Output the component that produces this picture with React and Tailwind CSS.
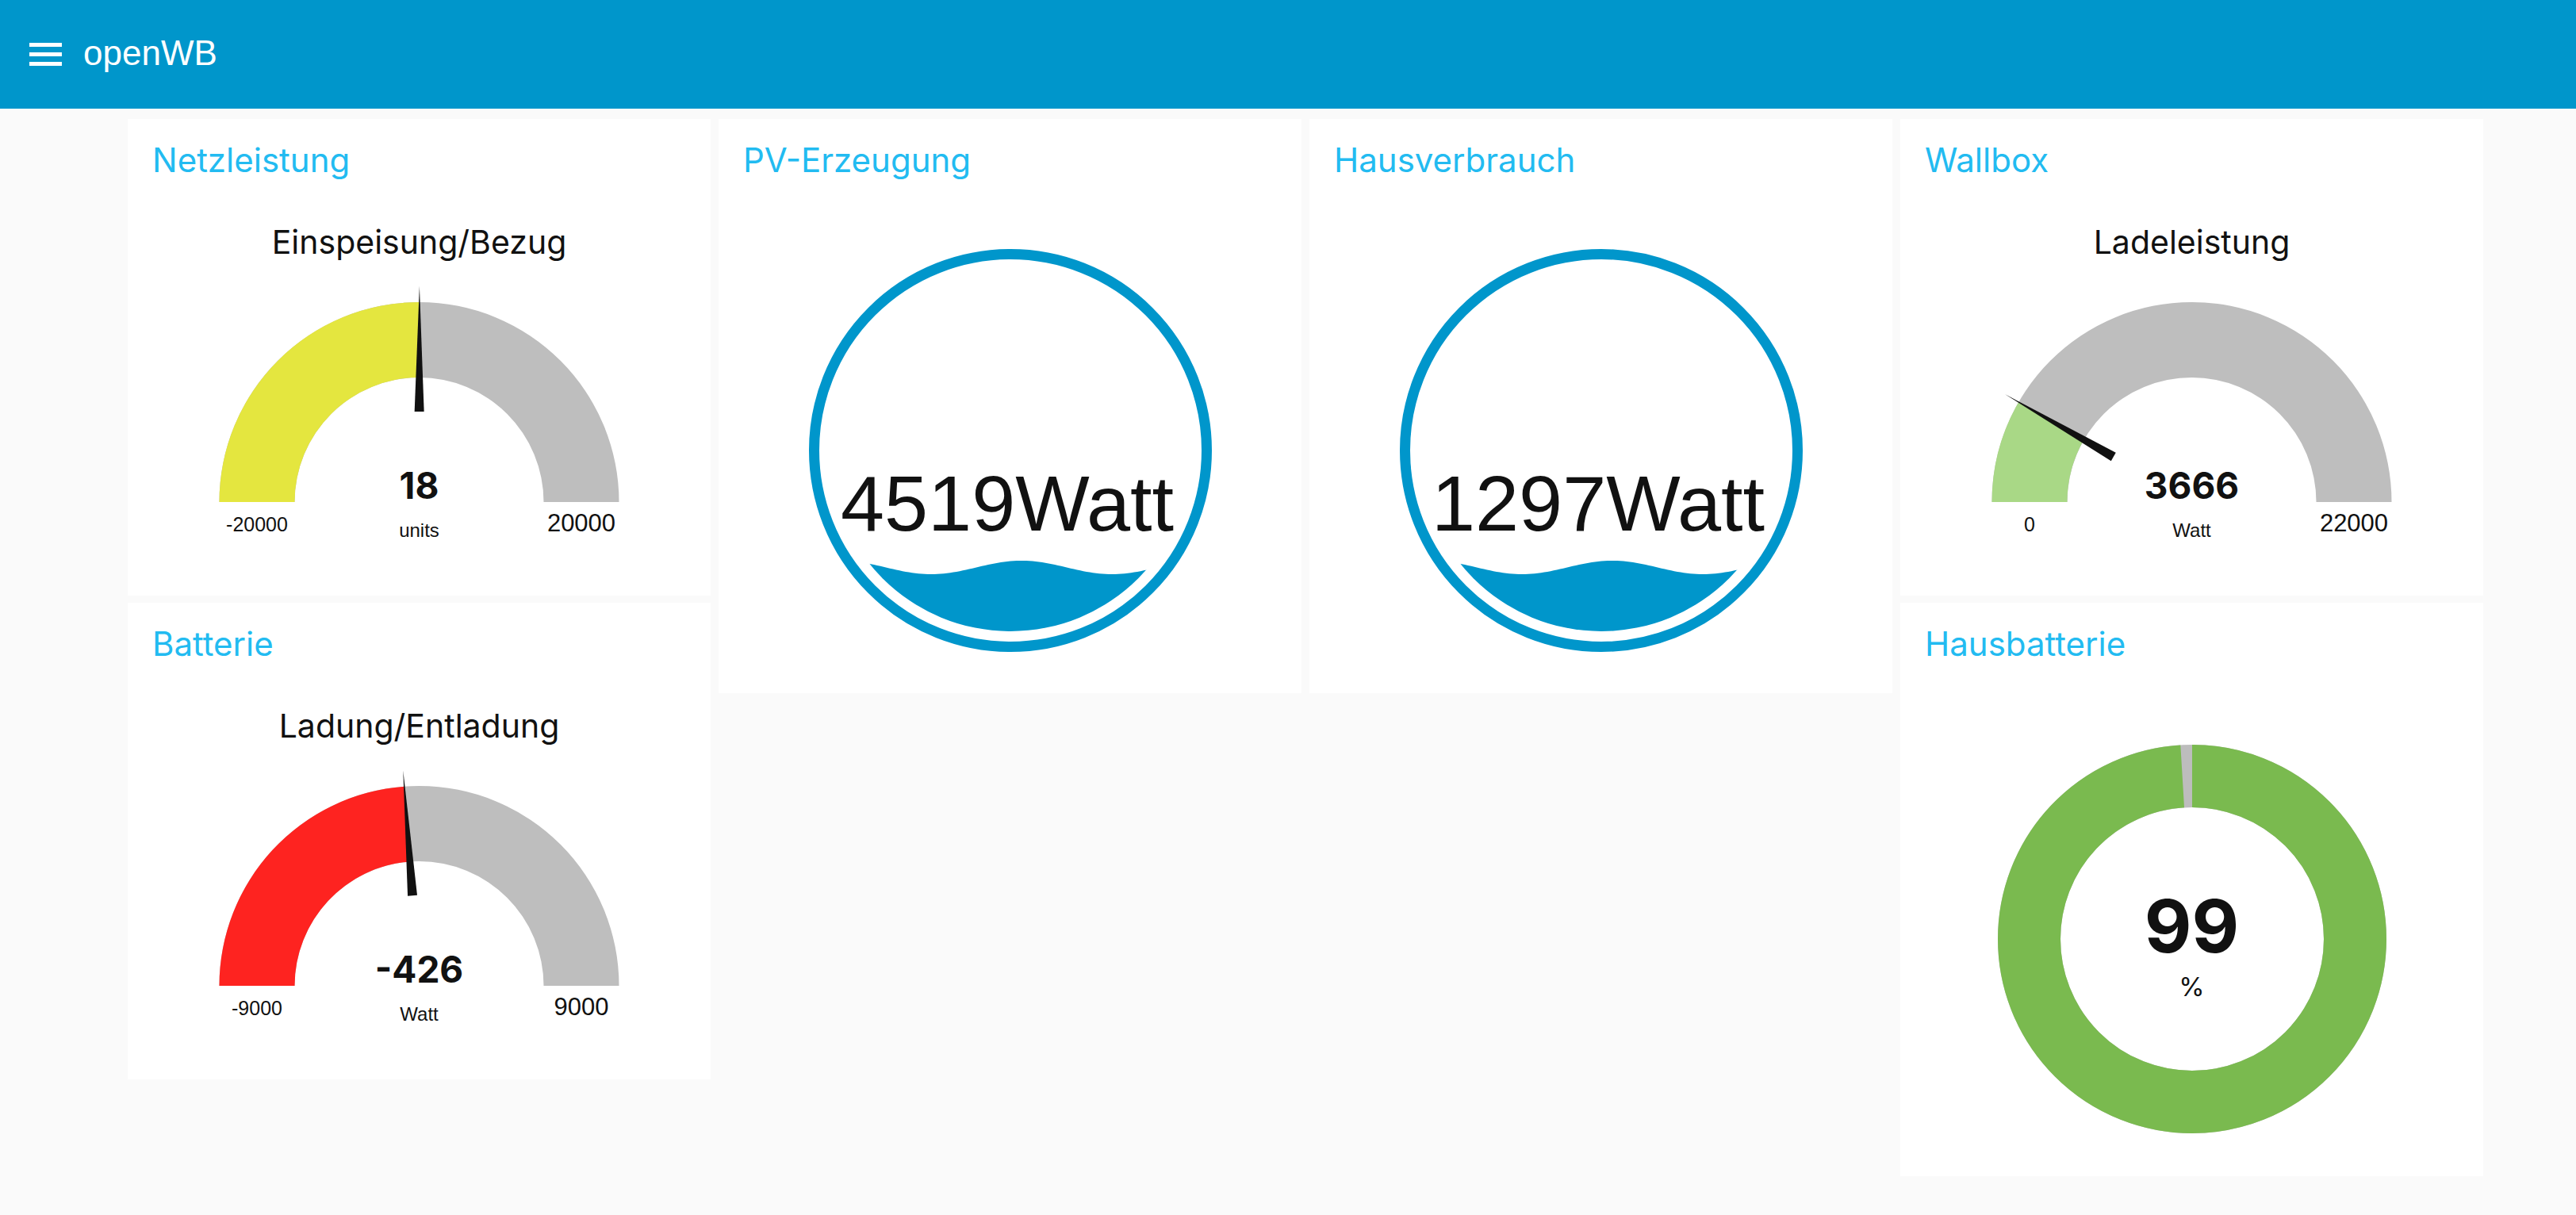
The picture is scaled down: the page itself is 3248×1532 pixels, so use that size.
import React from 'react';

const CARD_W = 735;

function pt(cx, cy, r, f) {
  const a = Math.PI * f;
  return [cx - r * Math.cos(a), cy - r * Math.sin(a)];
}

function sector(cx, cy, R, r, f0, f1) {
  const [x0, y0] = pt(cx, cy, R, f0);
  const [x1, y1] = pt(cx, cy, R, f1);
  const [x2, y2] = pt(cx, cy, r, f1);
  const [x3, y3] = pt(cx, cy, r, f0);
  return `M${x0} ${y0} A${R} ${R} 0 0 1 ${x1} ${y1} L${x2} ${y2} A${r} ${r} 0 0 0 ${x3} ${y3} Z`;
}

function Card({ title, height, children }) {
  return (
    <div className="bg-white flex flex-col" style={{ width: CARD_W, height }}>
      <h2 className="pl-[31px] pt-[31px] text-[42px] leading-[42px] text-[#22bbf1] font-['Inter',sans-serif] font-normal">
        {title}
      </h2>
      {children}
    </div>
  );
}

function Gauge({ label, value, min, max, unit, color }) {
  const cx = 367.5;
  const cy = 410;
  const R = 252;
  const r = 157;
  const f = (value - min) / (max - min);
  const a = Math.PI * f;
  const u = [-Math.cos(a), -Math.sin(a)];
  const p = [Math.sin(a), -Math.cos(a)];
  const rb = 114;
  const rt = 272;
  const w = 6;
  const needle = [
    [cx + rb * u[0] + w * p[0], cy + rb * u[1] + w * p[1]],
    [cx + rt * u[0], cy + rt * u[1]],
    [cx + rb * u[0] - w * p[0], cy + rb * u[1] - w * p[1]],
  ]
    .map((q) => q.join(','))
    .join(' ');

  return (
    <svg width={CARD_W} height="528" className="block">
      <text x={cx} y="97" textAnchor="middle" fontFamily="Inter, sans-serif" fontSize="41" fill="#111">
        {label}
      </text>
      <path d={sector(cx, cy, R, r, 0, 1)} fill="#bebebe" />
      <path d={sector(cx, cy, R, r, 0, f)} fill={color} />
      <polygon points={needle} fill="#111" />
      <text x={cx} y="406" textAnchor="middle" fontFamily="Inter, sans-serif" fontWeight="700" fontSize="46" fill="#111">
        {value}
      </text>
      <text x={cx} y="454" textAnchor="middle" fontFamily="'Liberation Sans', Arial, sans-serif" fontSize="24" fill="#111">
        {unit}
      </text>
      <text x={cx - 204.5} y="447" textAnchor="middle" fontFamily="'Liberation Sans', Arial, sans-serif" fontSize="25" fill="#111">
        {min}
      </text>
      <text x={cx + 204.5} y="447" textAnchor="middle" fontFamily="'Liberation Sans', Arial, sans-serif" fontSize="31" fill="#111">
        {max}
      </text>
    </svg>
  );
}

function LiquidGauge({ id, text }) {
  const cx = 368;
  const cy = 345;
  const mean = 492.5;
  let d = '';
  for (let x = 100; x <= 640; x += 4) {
    const y = mean - 8.5 * Math.cos((2 * Math.PI * (x - 382)) / 228);
    d += `${x === 100 ? 'M' : 'L'}${x} ${y.toFixed(2)} `;
  }
  d += 'L640 700 L100 700 Z';

  return (
    <svg width={CARD_W} height="651" className="block">
      <defs>
        <clipPath id={id}>
          <path d={d} />
        </clipPath>
      </defs>
      <circle cx={cx} cy={cy} r="247.5" fill="none" stroke="#0096cb" strokeWidth="13" />
      <circle cx={cx} cy={cy} r="228" fill="#0096cb" clipPath={`url(#${id})`} />
      <text x="364" y="446" textAnchor="middle" fontFamily="'Liberation Sans', Arial, sans-serif" fontSize="99" fill="#111">
        {text}
      </text>
    </svg>
  );
}

function Donut({ value, unit }) {
  const cx = 368;
  const cy = 351;
  const r = 205.5;
  const c = 2 * Math.PI * r;
  return (
    <div className="relative">
      <svg width={CARD_W} height="650" className="block">
        <circle cx={cx} cy={cy} r={r} fill="none" stroke="#bdbdbd" strokeWidth="79" />
        <circle
          cx={cx}
          cy={cy}
          r={r}
          fill="none"
          stroke="#7aba4f"
          strokeWidth="79"
          strokeDasharray={`${(c * value) / 100} ${c}`}
          transform={`rotate(-90 ${cx} ${cy})`}
        />
      </svg>
      <div className="absolute inset-x-0 top-[289px] flex flex-col items-center text-[#111] font-['Inter',sans-serif]">
        <div className="text-[92px] leading-[92px] font-bold">{value}</div>
        <div className="mt-[14px] text-[33px] leading-[33px]">{unit}</div>
      </div>
    </div>
  );
}

export default function App() {
  return (
    <div className="min-h-screen bg-[#fafafa]">
      <header className="h-[137px] bg-[#0096cb] flex items-center">
        <div className="ml-[37px] w-[41px] flex flex-col gap-[7px]">
          <span className="block h-[5px] bg-white" />
          <span className="block h-[5px] bg-white" />
          <span className="block h-[5px] bg-white" />
        </div>
        <span className="ml-[27px] mb-[4px] text-white text-[44px] leading-[44px] font-['Liberation_Sans',Arial,sans-serif]">
          openWB
        </span>
      </header>

      <main className="flex gap-[10px] pl-[161px] pt-[13px]">
        <div className="flex flex-col gap-[9px]">
          <Card title="Netzleistung" height={601}>
            <Gauge label="Einspeisung/Bezug" value={18} min={-20000} max={20000} unit="units" color="#e4e63f" />
          </Card>
          <Card title="Batterie" height={601}>
            <Gauge label="Ladung/Entladung" value={-426} min={-9000} max={9000} unit="Watt" color="#fe2320" />
          </Card>
        </div>
        <div className="flex flex-col">
          <Card title="PV-Erzeugung" height={724}>
            <LiquidGauge id="wave-pv" text="4519Watt" />
          </Card>
        </div>
        <div className="flex flex-col">
          <Card title="Hausverbrauch" height={724}>
            <LiquidGauge id="wave-haus" text="1297Watt" />
          </Card>
        </div>
        <div className="flex flex-col gap-[9px]">
          <Card title="Wallbox" height={601}>
            <Gauge label="Ladeleistung" value={3666} min={0} max={22000} unit="Watt" color="#a9d886" />
          </Card>
          <Card title="Hausbatterie" height={723}>
            <Donut value={99} unit="%" />
          </Card>
        </div>
      </main>
    </div>
  );
}
